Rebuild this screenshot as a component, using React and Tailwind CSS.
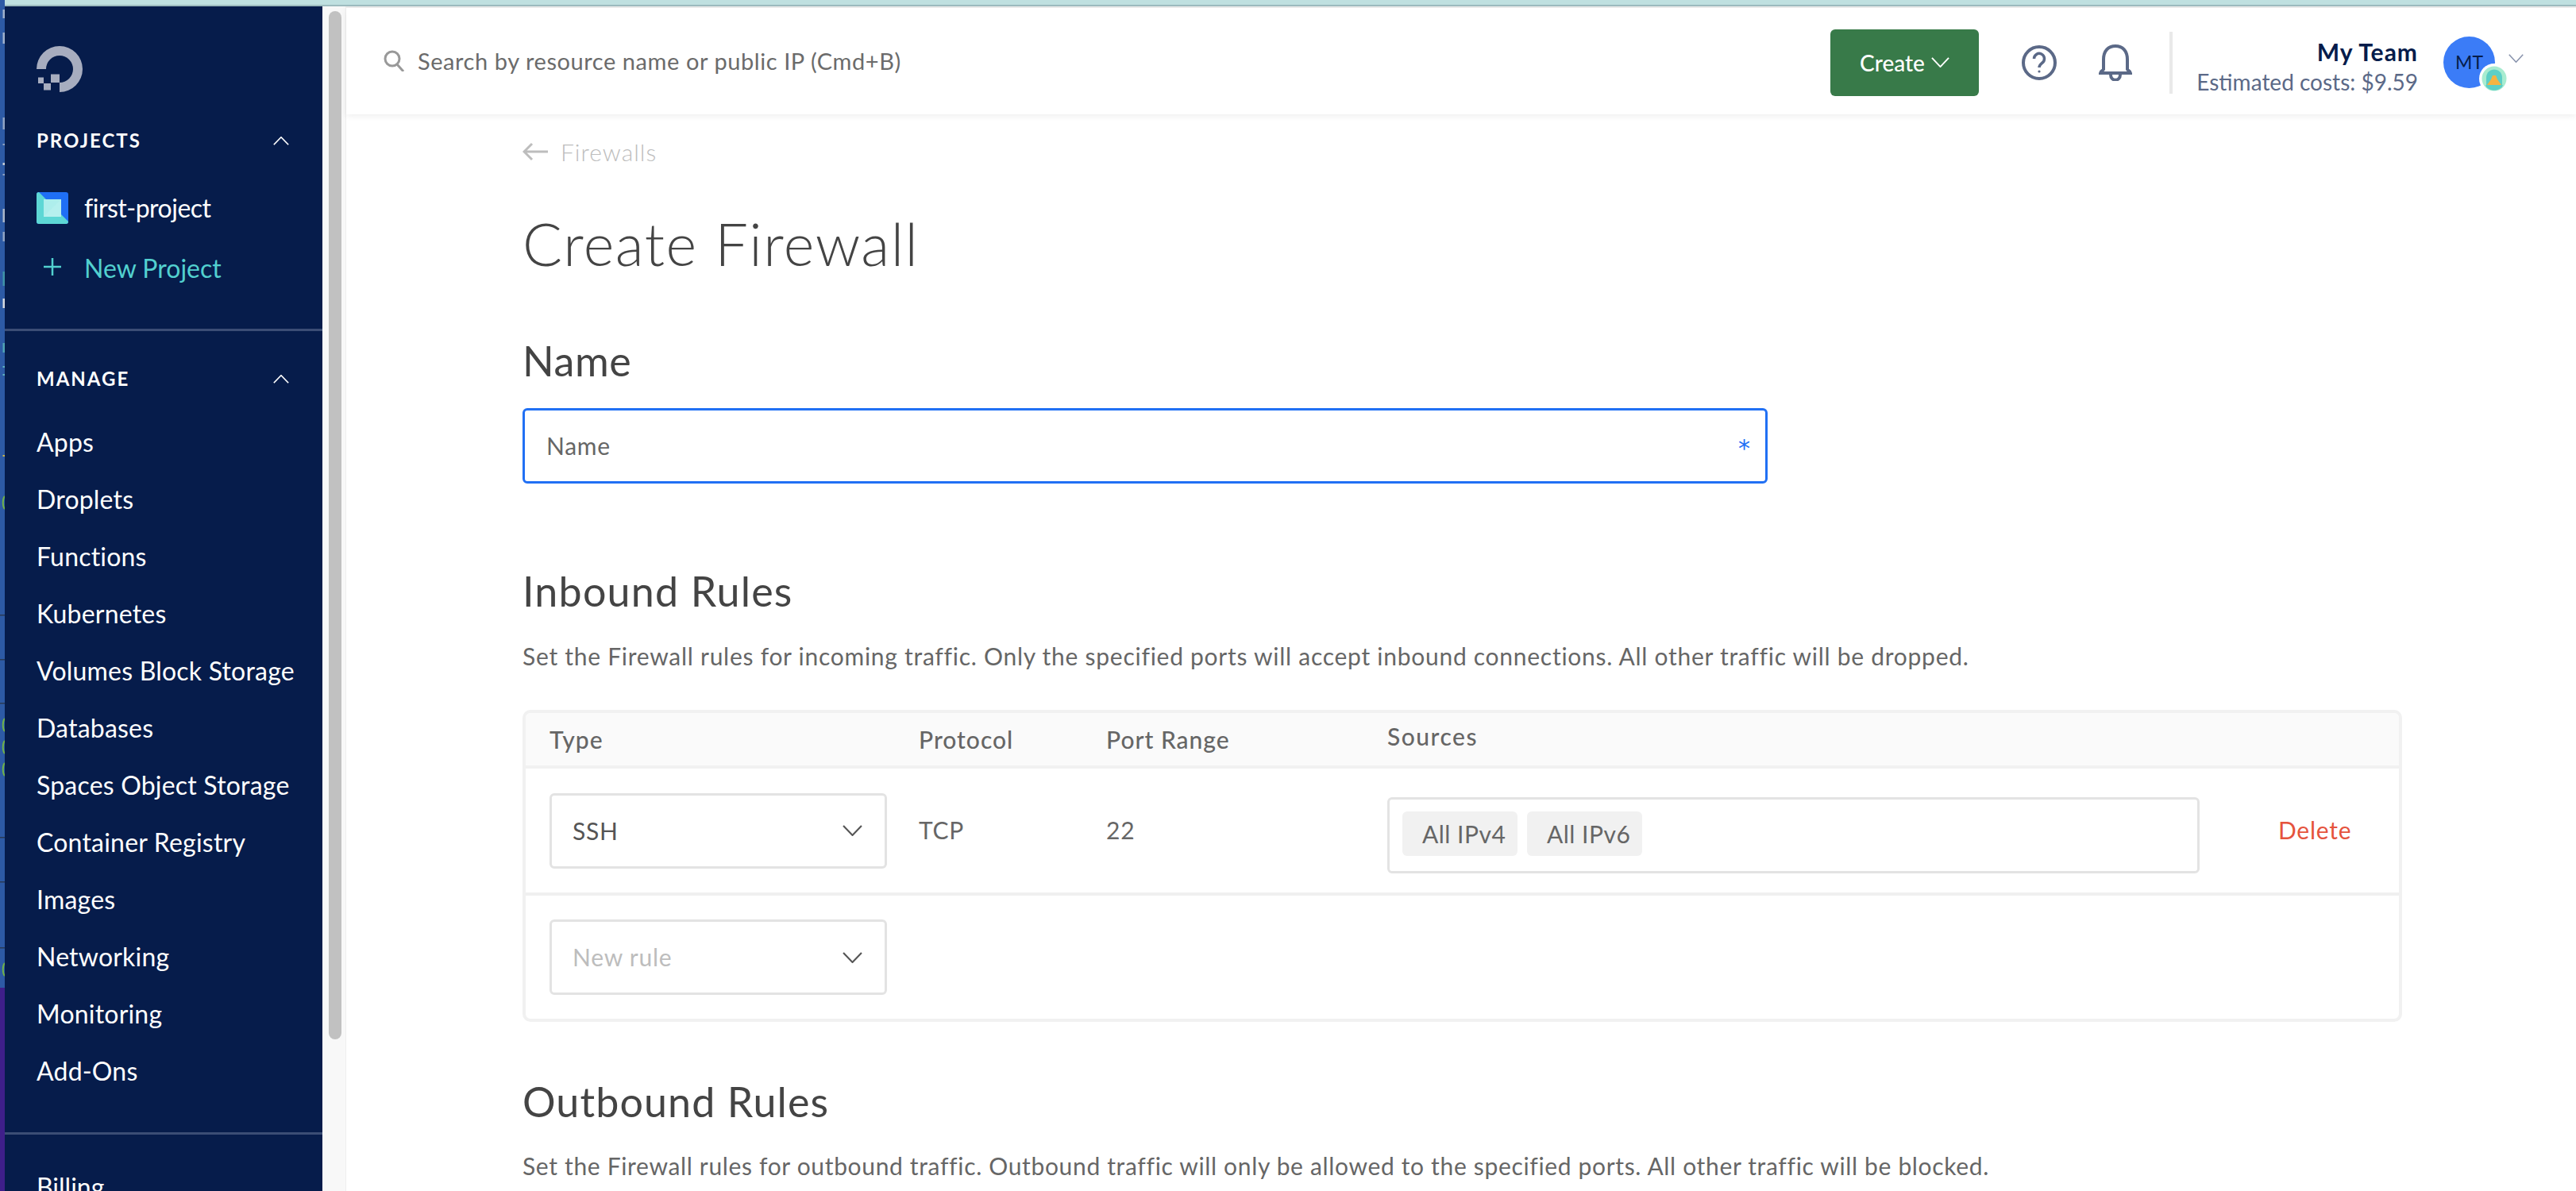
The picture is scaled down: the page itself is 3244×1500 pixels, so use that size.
import React from 'react';

const MANAGE_ITEMS = [
  'Apps',
  'Droplets',
  'Functions',
  'Kubernetes',
  'Volumes Block Storage',
  'Databases',
  'Spaces Object Storage',
  'Container Registry',
  'Images',
  'Networking',
  'Monitoring',
  'Add-Ons',
];

// Bits of the desktop window peeking out behind the browser, as [y, height, colour]
const STRIP_MARKS = [
  [12, 11, '#9fb0cc'],
  [41, 14, '#9fb0cc'],
  [148, 15, '#8fa3c4'],
  [181, 2, '#8fa3c4'],
  [205, 3, '#c4ccd8'],
  [219, 2, '#8fa3c4'],
  [263, 17, '#a9b5c9'],
  [292, 12, '#8fa3c4'],
  [342, 18, '#3f94a8'],
  [376, 12, '#d5d9e0'],
  [432, 12, '#4fa3b5'],
  [461, 2, '#5fb3c0'],
  [471, 2, '#5fb3c0'],
  [573, 2, '#c9b34a'],
];
const STRIP_LINES = [774, 830, 885, 1054, 1110, 1193];
const STRIP_ARCS = [633, 913, 941, 969, 1221];

const DesktopStrip = () => (
  <svg className="w-[6px] h-[1500px] shrink-0" viewBox="0 0 6 1500">
    <rect width="6" height="1244" fill="#2d5aa5" />
    <rect y="1244" width="6" height="256" fill="#3f1f8a" />
    {STRIP_MARKS.map(([y, h, color]) => (
      <rect key={y} x="3.5" y={y} width="2.5" height={h} fill={color} />
    ))}
    {STRIP_LINES.map((y) => (
      <rect key={y} y={y} width="6" height="1.5" fill="#2a3a55" />
    ))}
    {STRIP_ARCS.map((y) => (
      <path key={y} d={`M6 ${y - 8}C3 ${y - 5} 3 ${y + 5} 6 ${y + 8}`} fill="none" stroke="#6fb04a" strokeWidth="2" />
    ))}
  </svg>
);

const Chevron = ({ className, up = false, stroke = '#555', sw = 2 }) => (
  <svg className={className} viewBox="0 0 24 14" fill="none" preserveAspectRatio="none">
    <polyline points={up ? '1,13 12,1 23,13' : '1,1 12,13 23,1'} stroke={stroke} strokeWidth={sw} />
  </svg>
);

const Logo = () => (
  <svg className="w-[58px] h-[58px]" viewBox="0 0 58 58" fill="#a7adbf">
    <path d="M0 29A29 29 0 1 1 29 58V46A17 17 0 1 0 12 29Z" />
    <rect x="18" y="35.5" width="11" height="10.5" />
    <rect x="9" y="47" width="9" height="8.5" />
    <rect x="2" y="39.5" width="7" height="7.5" />
  </svg>
);

const ProjectIcon = () => (
  <svg className="w-10 h-10 shrink-0" viewBox="0 0 40 40">
    <rect width="40" height="40" rx="3" fill="#1f6ff5" />
    <path d="M0 3A3 3 0 0 1 3 0L40 37V37A3 3 0 0 1 37 40H3A3 3 0 0 1 0 37Z" fill="#5dd7d5" />
    <rect x="9" y="9" width="22" height="22" fill="#aeeeec" />
    <path d="M9 31L31 9V31Z" fill="#b6f0ee" />
  </svg>
);

const HelpIcon = () => (
  <svg className="w-[44px] h-[44px]" viewBox="0 0 44 44" fill="none" stroke="#5b6987" strokeWidth="4">
    <circle cx="22" cy="22" r="20" />
    <path d="M15.5 17a6.5 6.5 0 1 1 10.5 5c-2.5 2-4 3-4 6" strokeWidth="3.5" />
    <circle cx="22" cy="33" r="1.6" fill="#5b6987" stroke="none" />
  </svg>
);

const BellIcon = () => (
  <svg className="w-[42px] h-[46px]" viewBox="0 0 42 46" fill="none" stroke="#5b6987" strokeWidth="4">
    <path d="M6 32V19C6 8 12 2 21 2s15 6 15 17v13" />
    <path d="M6 31c0 2-4 2-4 5h38c0-3-4-3-4-5" />
    <path d="M15 38c0 9 12 9 12 0" />
  </svg>
);

const SearchIcon = () => (
  <svg className="w-[27px] h-[27px]" viewBox="0 0 27 27" fill="none" stroke="#999" strokeWidth="3">
    <circle cx="11" cy="11" r="9" />
    <path d="M17 18l8 9" />
  </svg>
);

const TeamBadge = () => (
  <svg className="absolute left-[45px] top-[34px] w-[38px] h-[38px]" viewBox="0 0 38 38">
    <circle cx="19" cy="19" r="19" fill="#fff" />
    <circle cx="19" cy="19" r="15.5" fill="#a8ecd0" />
    <path d="M9 30V18C9 4 29 4 29 18V30Z" fill="#5dcfc6" />
    <path d="M10 27L15 20 17 15H21L23 20 28 27Z" fill="#f5b342" />
    <path d="M8 27H30C27 36 11 36 8 27Z" fill="#5dcfc6" />
  </svg>
);

const SectionHeader = ({ label }) => (
  <div className="flex items-center justify-between pl-10 pr-[42px] h-8">
    <span className="text-[24px] font-bold tracking-[2px] text-white">{label}</span>
    <Chevron up stroke="#fff" className="w-5 h-[11px]" />
  </div>
);

const Sidebar = () => (
  <aside className="w-[400px] shrink-0 bg-[#061c4b] flex flex-col text-white overflow-hidden *:shrink-0">
    <div className="pl-10 pt-[50px]">
      <Logo />
    </div>
    <div className="mt-[45px]">
      <SectionHeader label="PROJECTS" />
    </div>
    <div className="mt-[49px] flex items-center pl-10 h-10 gap-5">
      <ProjectIcon />
      <span className="text-[32px] leading-10 tracking-[-0.5px]">first-project</span>
    </div>
    <div className="mt-9 flex items-center pl-10 h-10 gap-5 text-[#52d0cf]">
      <svg className="w-10 h-10 shrink-0" viewBox="0 0 40 40" stroke="#52d0cf" strokeWidth="2.5">
        <path d="M9 18H31M20 7V29" />
      </svg>
      <span className="text-[32px] leading-10">New Project</span>
    </div>
    <div className="mt-[56px] h-[3px] bg-[#3b4d75]" />
    <div className="mt-[44px]">
      <SectionHeader label="MANAGE" />
    </div>
    <nav className="mt-7 flex flex-col pl-10">
      {MANAGE_ITEMS.map((item) => (
        <span key={item} className="h-[72px] text-[32px] leading-[72px] tracking-[0.2px] whitespace-nowrap">
          {item}
        </span>
      ))}
    </nav>
    <div className="mt-[41px] h-[3px] bg-[#3b4d75]" />
    <span className="pl-10 mt-[46px] text-[32px] leading-10">Billing</span>
  </aside>
);

const SelectBox = ({ label, muted = false }) => (
  <div className="w-[425px] h-[95px] border-[3px] border-[#e3e3e3] rounded-[6px] bg-white flex items-center justify-between pl-[26px] pr-[28px]">
    <span className={`text-[30px] tracking-[0.75px] ${muted ? 'text-[#bdbdbd]' : 'text-[#555]'}`}>{label}</span>
    <Chevron className="w-[25px] h-[14px]" />
  </div>
);

const Chip = ({ label }) => (
  <span className="h-[56px] w-[145px] rounded-[6px] bg-[#f1f1f1] pl-[25px] text-[30px] leading-[56px] tracking-[0.5px] text-[#666]">
    {label}
  </span>
);

const RulesTable = () => (
  <div className="mt-12 w-[2367px] h-[393px] border-[4px] border-[#f1f1f1] rounded-[10px] overflow-hidden">
    <div className="h-[70px] bg-[#fafafa] border-b-[4px] border-[#f1f1f1] pl-[30px] grid grid-cols-[465px_236px_354px_1fr] items-center text-[30px] font-medium tracking-[1px] text-[#666]">
      <span>Type</span>
      <span>Protocol</span>
      <span>Port Range</span>
      <span className="-mt-[8px] tracking-[1.5px]">Sources</span>
    </div>
    <div className="h-[160px] border-b-[4px] border-[#f0f0f0] pl-[30px] grid grid-cols-[465px_236px_354px_1fr] items-center text-[30px] tracking-[0.75px] text-[#666]">
      <SelectBox label="SSH" />
      <span className="-mt-[2px]">TCP</span>
      <span className="-mt-[2px]">22</span>
      <div className="flex items-center">
        <div className="mt-[12px] w-[1023px] h-[96px] border-[3px] border-[#e3e3e3] rounded-[6px] pl-4 pt-[15px] flex gap-3 items-start">
          <Chip label="All IPv4" />
          <Chip label="All IPv6" />
        </div>
        <span className="ml-[99px] -mt-[2px] text-[#e5533d]">Delete</span>
      </div>
    </div>
    <div className="pl-[30px] pt-[30px]">
      <SelectBox label="New rule" muted />
    </div>
  </div>
);

const TopBar = () => (
  <header className="h-[134px] shrink-0 bg-white shadow-[0_2px_8px_rgba(0,0,0,0.07)] flex items-center relative">
    <div className="ml-[47px] flex items-center gap-4 -mt-[1px]">
      <SearchIcon />
      <span className="text-[29px] tracking-[0.57px] text-[#6b6b6b]">Search by resource name or public IP (Cmd+B)</span>
    </div>
    <div className="ml-auto flex items-center mt-[3px]">
      <button className="w-[187px] h-[84px] rounded-[6px] bg-[#387a49] text-white text-[28px] font-medium flex items-center justify-center gap-2">
        Create
        <Chevron stroke="#fff" className="w-[23px] h-[13px]" />
      </button>
      <div className="ml-[54px]">
        <HelpIcon />
      </div>
      <div className="ml-[53px]">
        <BellIcon />
      </div>
      <div className="ml-[47px] w-1 h-[78px] bg-[#e9e9e9]" />
      <div className="w-[309px] flex flex-col items-end mt-[11px]">
        <span className="text-[30px] leading-[38px] font-bold tracking-[1px] text-[#061c4b]">My Team</span>
        <span className="text-[28px] leading-[38px] text-[#5b6987]">Estimated costs: $9.59</span>
      </div>
      <div className="ml-8 w-[65px] h-[65px] rounded-full bg-[#3b7cf7] relative flex items-center justify-center text-[23px] text-[#061c4b]">
        MT
        <TeamBadge />
      </div>
      <Chevron stroke="#8a94ad" className="ml-[17px] mr-[66px] w-[19px] h-[11px] -mt-[10px]" />
    </div>
  </header>
);

const App = () => (
  <div className="w-[3244px] h-[1500px] overflow-hidden flex bg-white [font-family:Lato,sans-serif]">
    <DesktopStrip />
    <div className="flex-1 flex flex-col min-w-0">
      <div className="h-2 shrink-0 bg-[#bfe0e0] border-b-2 border-[#9dbcbf]" />
      <div className="flex-1 flex min-h-0">
        <Sidebar />
        <div className="w-[30px] shrink-0 bg-[#f8f8f8] border-r border-[#eeeeee] pl-2 pt-[6px]">
          <div className="w-4 h-[1295px] rounded-full bg-[#c1c1c1]" />
        </div>
        <main className="flex-1 min-w-0 flex flex-col border-t-2 border-[#eeeeee]">
          <TopBar />
          <div className="pl-[222px] flex flex-col items-start text-[#444]">
            <div className="mt-[27px] h-10 flex items-center gap-[16px] text-[30px] font-light tracking-[1px] text-[#bdbdbd]">
              <svg className="w-[32px] h-[24px]" viewBox="0 0 32 24" fill="none" stroke="#bdbdbd" strokeWidth="3">
                <path d="M32 12H2M12 2L2 12l10 10" />
              </svg>
              Firewalls
            </div>
            <h1 className="mt-[51px] h-[90px] text-[74px] leading-[90px] font-light tracking-[1.5px]">Create Firewall</h1>
            <h2 className="mt-[72px] h-[60px] text-[52px] leading-[60px] tracking-[0.6px]">Name</h2>
            <div className="mt-[30px] w-[1568px] h-[95px] border-[3px] border-[#2170f4] rounded-[6px] flex items-center justify-between pl-[27px] pr-[19px]">
              <span className="text-[30px] tracking-[0.75px] text-[#666]">Name</span>
              <span className="text-[30px] leading-none text-[#2170f4] mt-[6px] [font-family:'DejaVu_Sans',sans-serif]">*</span>
            </div>
            <h2 className="mt-[105px] h-[60px] text-[52px] leading-[60px] tracking-[1.2px]">Inbound Rules</h2>
            <p className="mt-[32px] h-10 text-[30px] leading-10 tracking-[0.73px] text-[#666] whitespace-nowrap">
              Set the Firewall rules for incoming traffic. Only the specified ports will accept inbound connections. All other traffic will be dropped.
            </p>
            <RulesTable />
            <h2 className="mt-[70px] h-[60px] text-[52px] leading-[60px] tracking-[1.1px]">Outbound Rules</h2>
            <p className="mt-[31px] h-10 text-[30px] leading-10 tracking-[0.66px] text-[#666] whitespace-nowrap">
              Set the Firewall rules for outbound traffic. Outbound traffic will only be allowed to the specified ports. All other traffic will be blocked.
            </p>
          </div>
        </main>
      </div>
    </div>
  </div>
);

export default App;
